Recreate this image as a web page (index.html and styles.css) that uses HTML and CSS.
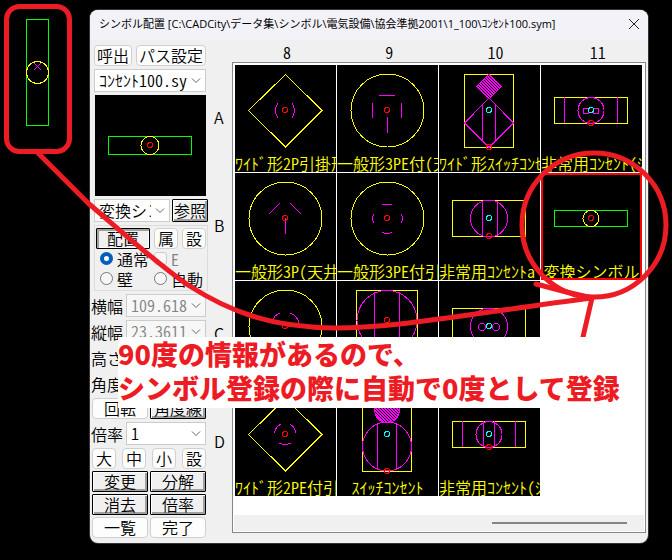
FILE: index.html
```
<!DOCTYPE html>
<html lang="ja">
<head>
  <meta charset="UTF-8" />
  <meta name="viewport" content="width=device-width, initial-scale=1.0" />
  <title>シンボル配置</title>
  <link rel="stylesheet" href="styles.css">
</head>
<body>
  <!-- 図面側の縦シンボル -->
  <svg class="drawing" width="76" height="160" viewBox="0 0 76 160">
    <rect class="g" x="26.5" y="19.5" width="22" height="106" />
    <circle class="y" cx="37.5" cy="72.5" r="11" />
    <path class="m" d="M34 63L41 70M41 63L34 70" />
  </svg>

  <main class="window">
    <header class="title-bar">
      <h1>シンボル配置 [C:\CADCity\データ集\シンボル\電気設備\協会準拠2001\1_100\ｺﾝｾﾝﾄ100.sym]</h1>
      <button class="close" aria-label="閉じる">
        <svg width="12" height="12" viewBox="0 0 12 12"><path d="M1 1L11 11M11 1L1 11" /></svg>
      </button>
    </header>

    <div class="content">
      <form class="sidebar">
        <div class="row inset">
          <button type="button" class="btn call">呼出</button>
          <button type="button" class="btn fill">パス設定</button>
        </div>
        <div class="row inset">
          <select class="fill" aria-label="ファイル"><option>ｺﾝｾﾝﾄ100.sy</option></select>
        </div>
        <div class="preview">
          <svg width="111" height="101" viewBox="0 0 111 101">
            <rect class="g" x="13.5" y="41.5" width="83" height="18" />
            <circle class="y" cx="55" cy="50.5" r="9" />
            <circle class="r" cx="55" cy="50" r="2.5" />
          </svg>
        </div>
        <div class="row tight">
          <select class="kind" aria-label="種類"><option>変換シンボル</option></select>
          <button type="button" class="btn raised fill">参照</button>
        </div>
        <fieldset class="group">
          <div class="row">
            <button type="button" class="btn raised pressed">配置</button>
            <button type="button" class="btn small">属</button>
            <button type="button" class="btn small">設</button>
          </div>
          <div class="choices">
            <label><input type="radio" name="mode" checked>通常</label>
            <label class="off"><input type="checkbox" disabled>E</label>
            <label><input type="radio" name="mode">壁</label>
            <label><input type="radio" name="mode">自動</label>
          </div>
        </fieldset>
        <div class="field">
          <label for="w">横幅</label>
          <select id="w" disabled><option>109.618</option></select>
        </div>
        <div class="field">
          <label for="h">縦幅</label>
          <select id="h" disabled><option>23.3611</option></select>
        </div>
        <div class="field">
          <label for="z">高さ</label>
          <select id="z"></select>
        </div>
        <div class="field">
          <label for="a">角度</label>
          <select id="a"></select>
        </div>
        <div class="pair">
          <button type="button" class="btn">回転</button>
          <button type="button" class="btn raised">角度線</button>
        </div>
        <div class="field">
          <label for="s">倍率</label>
          <select id="s"><option>1</option></select>
        </div>
        <div class="commands">
          <div class="sizes">
            <button type="button" class="btn">大</button>
            <button type="button" class="btn">中</button>
            <button type="button" class="btn">小</button>
            <button type="button" class="btn">設</button>
          </div>
          <div class="pair">
            <button type="button" class="btn raised">変更</button>
            <button type="button" class="btn raised">分解</button>
          </div>
          <div class="pair">
            <button type="button" class="btn raised">消去</button>
            <button type="button" class="btn raised">倍率</button>
          </div>
          <div class="pair">
            <button type="button" class="btn">一覧</button>
            <button type="button" class="btn">完了</button>
          </div>
        </div>
      </form>

      <section class="browser">
        <div class="cols"><span>8</span><span>9</span><span>10</span><span>11</span></div>
        <div class="rows"><span>A</span><span>B</span><span>C</span><span>D</span></div>
        <div class="list">
          <div class="grid">
            <!-- A -->
            <button class="cell">
              <svg width="101" height="91" viewBox="0 0 101 91">
                <path class="y" d="M50.5 9.5L87 45.5L50.5 82L13.5 45.5Z" />
                <path class="m" d="M43 38Q38 45.5 43 53M57 38Q62 45.5 57 53" />
                <circle class="r" cx="50" cy="45" r="2.5" />
              </svg>
              <span>ﾜｲﾄﾞ形2P引掛形</span>
            </button>
            <button class="cell">
              <svg width="101" height="91" viewBox="0 0 101 91">
                <circle class="y" cx="50.5" cy="45.5" r="36.5" />
                <path class="m" d="M42 30.5H58M35.5 38V53M64.5 38V53M50.5 52V68" />
                <circle class="r" cx="50" cy="45" r="2.5" />
              </svg>
              <span>一般形3PE付(天</span>
            </button>
            <button class="cell">
              <svg width="101" height="91" viewBox="0 0 101 91">
                <defs>
                  <pattern id="hatch" width="3" height="3" patternUnits="userSpaceOnUse">
                    <rect width="3" height="3" fill="#f0f" />
                    <rect x="0" y="0" width="1" height="1" fill="#000" />
                    <rect x="1" y="1" width="1" height="1" fill="#000" />
                    <rect x="2" y="2" width="1" height="1" fill="#000" />
                  </pattern>
                </defs>
                <rect class="y" x="25.5" y="9.5" width="49" height="73" />
                <path class="m hatched" d="M50 9L62.5 21.5L50 34L37.5 21.5Z" />
                <path class="m" d="M50 33L74.5 58L50 82.5L25.5 58ZM43.5 40V76M56.5 40V76" />
                <circle class="c" cx="50" cy="45" r="2.5" />
                <circle class="r" cx="50" cy="82" r="2.5" />
              </svg>
              <span>ﾜｲﾄﾞ形ｽｲｯﾁｺﾝｾﾝﾄ</span>
            </button>
            <button class="cell">
              <svg width="101" height="91" viewBox="0 0 101 91">
                <rect class="y" x="13.5" y="32.5" width="73" height="26" />
                <path class="m" d="M23.5 32V58M76.5 32V58" />
                <circle class="m" cx="50" cy="45.5" r="13" />
                <circle class="m" cx="45" cy="46" r="3" />
                <circle class="m" cx="55" cy="46" r="3" />
                <circle class="c" cx="50" cy="45" r="2.5" />
                <circle class="r" cx="50" cy="58" r="2.5" />
              </svg>
              <span>非常用ｺﾝｾﾝﾄ(ｼﾞ</span>
            </button>
            <!-- B -->
            <button class="cell">
              <svg width="101" height="91" viewBox="0 0 101 91">
                <circle class="y" cx="50.5" cy="45.5" r="36.5" />
                <path class="m" d="M34 41L45 30M55 30L66 41M50.5 45V61" />
                <circle class="r" cx="50" cy="45" r="2.5" />
              </svg>
              <span>一般形3P(天井</span>
            </button>
            <button class="cell">
              <svg width="101" height="91" viewBox="0 0 101 91">
                <circle class="y" cx="50.5" cy="45.5" r="36.5" />
                <path class="m" d="M45 31.5H55M45 59Q50 62 55 59M37 41Q35 45 35.5 45.5Q35 46 37 50M64 41Q66 45 65.5 45.5Q66 46 64 50" />
                <circle class="r" cx="50" cy="45" r="2.5" />
              </svg>
              <span>一般形3PE付引</span>
            </button>
            <button class="cell">
              <svg width="101" height="91" viewBox="0 0 101 91">
                <rect class="y" x="13.5" y="27.5" width="73" height="36" />
                <circle class="m" cx="50" cy="45.5" r="18.5" />
                <path class="m" d="M43.5 28V63M58.5 28V63" />
                <circle class="c" cx="50" cy="45" r="2.5" />
                <circle class="r" cx="50" cy="63" r="2.5" />
              </svg>
              <span>非常用ｺﾝｾﾝﾄa</span>
            </button>
            <button class="cell selected">
              <svg width="101" height="91" viewBox="0 0 101 91">
                <rect class="g" x="13.5" y="37.5" width="73" height="16" />
                <circle class="y" cx="50" cy="45.5" r="8" />
                <circle class="r" cx="50" cy="45" r="2.5" />
              </svg>
              <span>変換シンボル</span>
            </button>
            <!-- C -->
            <button class="cell">
              <svg width="101" height="91" viewBox="0 0 101 91">
                <circle class="y" cx="50.5" cy="45.5" r="36.5" />
                <path class="m" d="M37 41Q39 34 45 32M55 32Q63 35 64 43" />
                <circle class="r" cx="50" cy="45" r="2.5" />
              </svg>
            </button>
            <button class="cell">
              <svg width="101" height="91" viewBox="0 0 101 91">
                <rect class="y" x="19.5" y="9.5" width="61" height="60" />
                <circle class="m" cx="50" cy="39.5" r="30" />
                <path class="m" d="M37.5 11V68M62.5 11V68" />
                <circle class="r" cx="50" cy="39" r="2.5" />
              </svg>
            </button>
            <button class="cell">
              <svg width="101" height="91" viewBox="0 0 101 91">
                <rect class="y" x="13.5" y="27.5" width="73" height="36" />
                <circle class="m" cx="50" cy="45.5" r="18.5" />
                <circle class="m" cx="43" cy="46" r="3.5" />
                <circle class="m" cx="57" cy="46" r="3.5" />
                <circle class="c" cx="50" cy="45" r="2.5" />
              </svg>
            </button>
            <div class="blank"></div>
            <!-- D -->
            <button class="cell">
              <svg width="101" height="91" viewBox="0 0 101 91">
                <path class="y" d="M50.5 9.5L87 45.5L50.5 82L13.5 45.5Z" />
                <path class="m" d="M39.5 44Q40 38 46 35M55 35Q60 38 61 44M44 54Q50 57 56 54" />
                <circle class="r" cx="50" cy="45" r="2.5" />
              </svg>
              <span>ﾜｲﾄﾞ形2PE付引</span>
            </button>
            <button class="cell">
              <svg width="101" height="91" viewBox="0 0 101 91">
                <rect class="y" x="25.5" y="9.5" width="49" height="73" />
                <circle class="m hatched" cx="50" cy="21" r="12.5" />
                <circle class="m" cx="50" cy="57.5" r="24.5" />
                <path class="m" d="M40.5 35V80M59.5 35V80" />
                <circle class="c" cx="50" cy="45" r="2.5" />
                <circle class="r" cx="50" cy="82" r="2.5" />
              </svg>
              <span class="center">ｽｲｯﾁｺﾝｾﾝﾄ</span>
            </button>
            <button class="cell">
              <svg width="101" height="91" viewBox="0 0 101 91">
                <rect class="y" x="13.5" y="32.5" width="73" height="26" />
                <path class="m" d="M23.5 32V58M44.5 32V58M55.5 32V58M76.5 32V58" />
                <circle class="m" cx="50" cy="45.5" r="13" />
                <circle class="c" cx="50" cy="45" r="2.5" />
                <circle class="r" cx="50" cy="58" r="2.5" />
              </svg>
              <span>非常用ｺﾝｾﾝﾄ(ｼﾞ</span>
            </button>
            <div class="blank"></div>
          </div>
          <div class="scrollbar"><div class="thumb"></div></div>
        </div>
      </section>
    </div>
  </main>

  <!-- 赤の書き込み -->
  <svg class="marks" width="672" height="340" viewBox="0 0 672 340">
    <rect x="6.5" y="6.5" width="63" height="145" rx="13" />
    <path d="M38 153L88 203C130 239 160 266 188 285C230 312 270 327 335 328C400 328 480 312 592 298" />
    <circle cx="594" cy="225" r="72" />
    <path d="M536 284Q565 292 592 298L583 337" />
  </svg>
  <p class="note">90度の情報があるので、<br>シンボル登録の際に自動で0度として登録</p>
</body>
</html>
```

FILE: styles.css
```
* {
  box-sizing: border-box;
}
body {
  margin: 0;
  padding: 10px 24px 17px 90px;
  min-height: 100vh;
  position: relative;
  background: #000;
  color: #000;
  font-family: "Noto Sans CJK JP", sans-serif;
  font-size: 16px;
  font-weight: 350;
  line-height: 16px;
}
button, select, input {
  font: inherit;
  color: inherit;
  margin: 0;
}

/* CAD線 */
svg {
  display: block;
  fill: none;
  shape-rendering: crispEdges;
}
.y { stroke: #ff0; }
.g { stroke: #0f0; }
.m { stroke: #f0f; }
.r { stroke: #f00; }
.c { stroke: #0ff; }
.hatched { fill: url(#hatch); }
.drawing {
  position: absolute;
  left: 0;
  top: 0;
}

/* ウィンドウ */
.window {
  background: #f0f0f0;
  border-radius: 8px;
  box-shadow: 0 0 0 1px #333;
  overflow: hidden;
}
.title-bar {
  display: flex;
  align-items: center;
  justify-content: space-between;
  height: 30px;
  padding: 0 8px 2px 9px;
  background: #f3f2f9;
}
.title-bar h1 {
  margin: 0;
  font-family: "Open Sans", "Noto Sans CJK JP", sans-serif;
  font-size: 11px;
  font-weight: normal;
  white-space: nowrap;
}
.close {
  border: 0;
  padding: 0;
  background: none;
}
.close svg {
  stroke: #222;
  shape-rendering: auto;
}
.content {
  display: flex;
}

/* 左側の操作部 */
.sidebar {
  display: flex;
  flex-direction: column;
  gap: 3px;
  width: 118px;
  padding: 5px 0;
  font-feature-settings: "hwid";
}
.row {
  display: flex;
  gap: 4px;
  padding-left: 4px;
}
.inset {
  padding-right: 2px;
}
.tight {
  gap: 2px;
}
.fill {
  flex: 1;
  min-width: 0;
}
.btn {
  height: 21px;
  padding: 0;
  border: 1px solid #d0d0d0;
  border-radius: 4px;
  background: #fdfdfd;
  line-height: 19px;
  white-space: nowrap;
}
.call {
  width: 38px;
}
.raised {
  border-color: #000;
  border-radius: 1px;
  background: #f0f0f0;
  box-shadow: inset 1px 1px #fff, inset -2px -2px #a0a0a0;
}
.tight .raised {
  height: 23px;
}
.pressed {
  width: 54px;
  box-shadow: inset 2px 2px #a0a0a0, inset -1px -1px #fff;
}
.small {
  width: 24px;
}
select {
  appearance: none;
  height: 23px;
  padding: 0 18px 0 4px;
  border: 1px solid #ccc;
  border-radius: 0;
  background: #fff url("data:image/svg+xml,%3Csvg xmlns='http://www.w3.org/2000/svg' width='10' height='6' fill='none' stroke='%23666'%3E%3Cpath d='M1 .5L5 4.5L9 .5'/%3E%3C/svg%3E") no-repeat right 4px center;
  line-height: 21px;
  font-feature-settings: "hwid";
}
select:disabled {
  color: #838383;
  background-color: #f7f7f7;
  opacity: 1;
}
.kind {
  width: 76px;
}
.preview {
  margin: 0 2px 0 5px;
  background: #000;
}
.group {
  height: 66px;
  min-width: 0;
  margin: 0 0 0 4px;
  padding: 2px 1px;
  border: 1px solid #dcdcdc;
}
.group .row {
  padding: 0;
}
.choices {
  display: grid;
  grid-template-columns: 54px 1fr;
  row-gap: 1px;
  padding-left: 4px;
}
.choices label {
  display: flex;
  align-items: center;
  gap: 4px;
  height: 19px;
  white-space: nowrap;
}
.off {
  color: #838383;
}
.choices input {
  appearance: none;
  flex: none;
  width: 13px;
  height: 13px;
  border: 1px solid #777;
  border-radius: 50%;
  background: #f7f7f7;
}
.choices input:checked {
  border: 4px solid #005fb8;
  background: #fff;
}
.choices input[type="checkbox"] {
  border-color: #ccc;
  border-radius: 3px;
}
.field {
  display: flex;
  align-items: center;
  justify-content: space-between;
  padding: 0 2px 0 1px;
}
.field select {
  width: 80px;
}
.pair, .sizes {
  display: grid;
  grid-template-columns: 1fr 1fr;
  gap: 2px;
  padding: 0 2px;
}
.sizes {
  grid-template-columns: repeat(4, 24px);
  justify-content: space-between;
}
.commands {
  display: flex;
  flex-direction: column;
  gap: 2px;
}

/* シンボル一覧 */
.browser {
  flex: 1;
  display: grid;
  grid-template-columns: 24px 1fr;
  grid-template-rows: 22px 1fr;
  padding: 0 2px 10px 0;
}
.cols {
  grid-column: 2;
  display: grid;
  grid-template-columns: repeat(4, 1fr);
  gap: 1px;
  padding: 4px 3px 0;
  font-feature-settings: "hwid";
}
.cols span {
  padding-left: 48px;
}
.rows {
  display: flex;
  flex-direction: column;
  padding: 2px 0 0 6px;
}
.rows span {
  height: 108px;
  line-height: 106px;
}
.list {
  display: flex;
  flex-direction: column;
  justify-content: space-between;
  min-width: 0;
  border: 1px solid #828790;
  background: #fff;
}
.grid {
  display: grid;
  grid-template-columns: repeat(4, minmax(0, 1fr));
  grid-auto-rows: 107px;
  gap: 1px;
  padding: 2px 3px 0 2px;
}
.cell {
  display: flex;
  flex-direction: column;
  align-items: center;
  min-width: 0;
  padding: 0;
  border: 0;
  background: #000;
  color: #ff0;
  overflow: hidden;
  font-feature-settings: "hwid";
}
.cell span {
  width: 100%;
  line-height: 15px;
  text-align: left;
  white-space: nowrap;
}
.cell .center,
.selected span {
  text-align: center;
}
.selected {
  outline: 2px solid #f00;
  outline-offset: -2px;
}
.scrollbar {
  height: 16px;
  margin: 0 1px 1px;
  padding: 7px 17px 0;
  background: #f0f0f0;
}
.thumb {
  width: 36%;
  height: 2px;
  margin-left: auto;
  background: #858585;
}

/* 注釈 */
.marks {
  position: absolute;
  left: 0;
  top: 0;
  stroke: #ed1c24;
  stroke-width: 5px;
  stroke-linecap: round;
  shape-rendering: auto;
  pointer-events: none;
}
.note {
  position: absolute;
  left: 118px;
  top: 337px;
  right: 32px;
  margin: 0;
  padding: 0 0 3px;
  background: #fff;
  color: #ed1c24;
  font-size: 27px;
  font-weight: 900;
  line-height: 34px;
  white-space: nowrap;
}
```
